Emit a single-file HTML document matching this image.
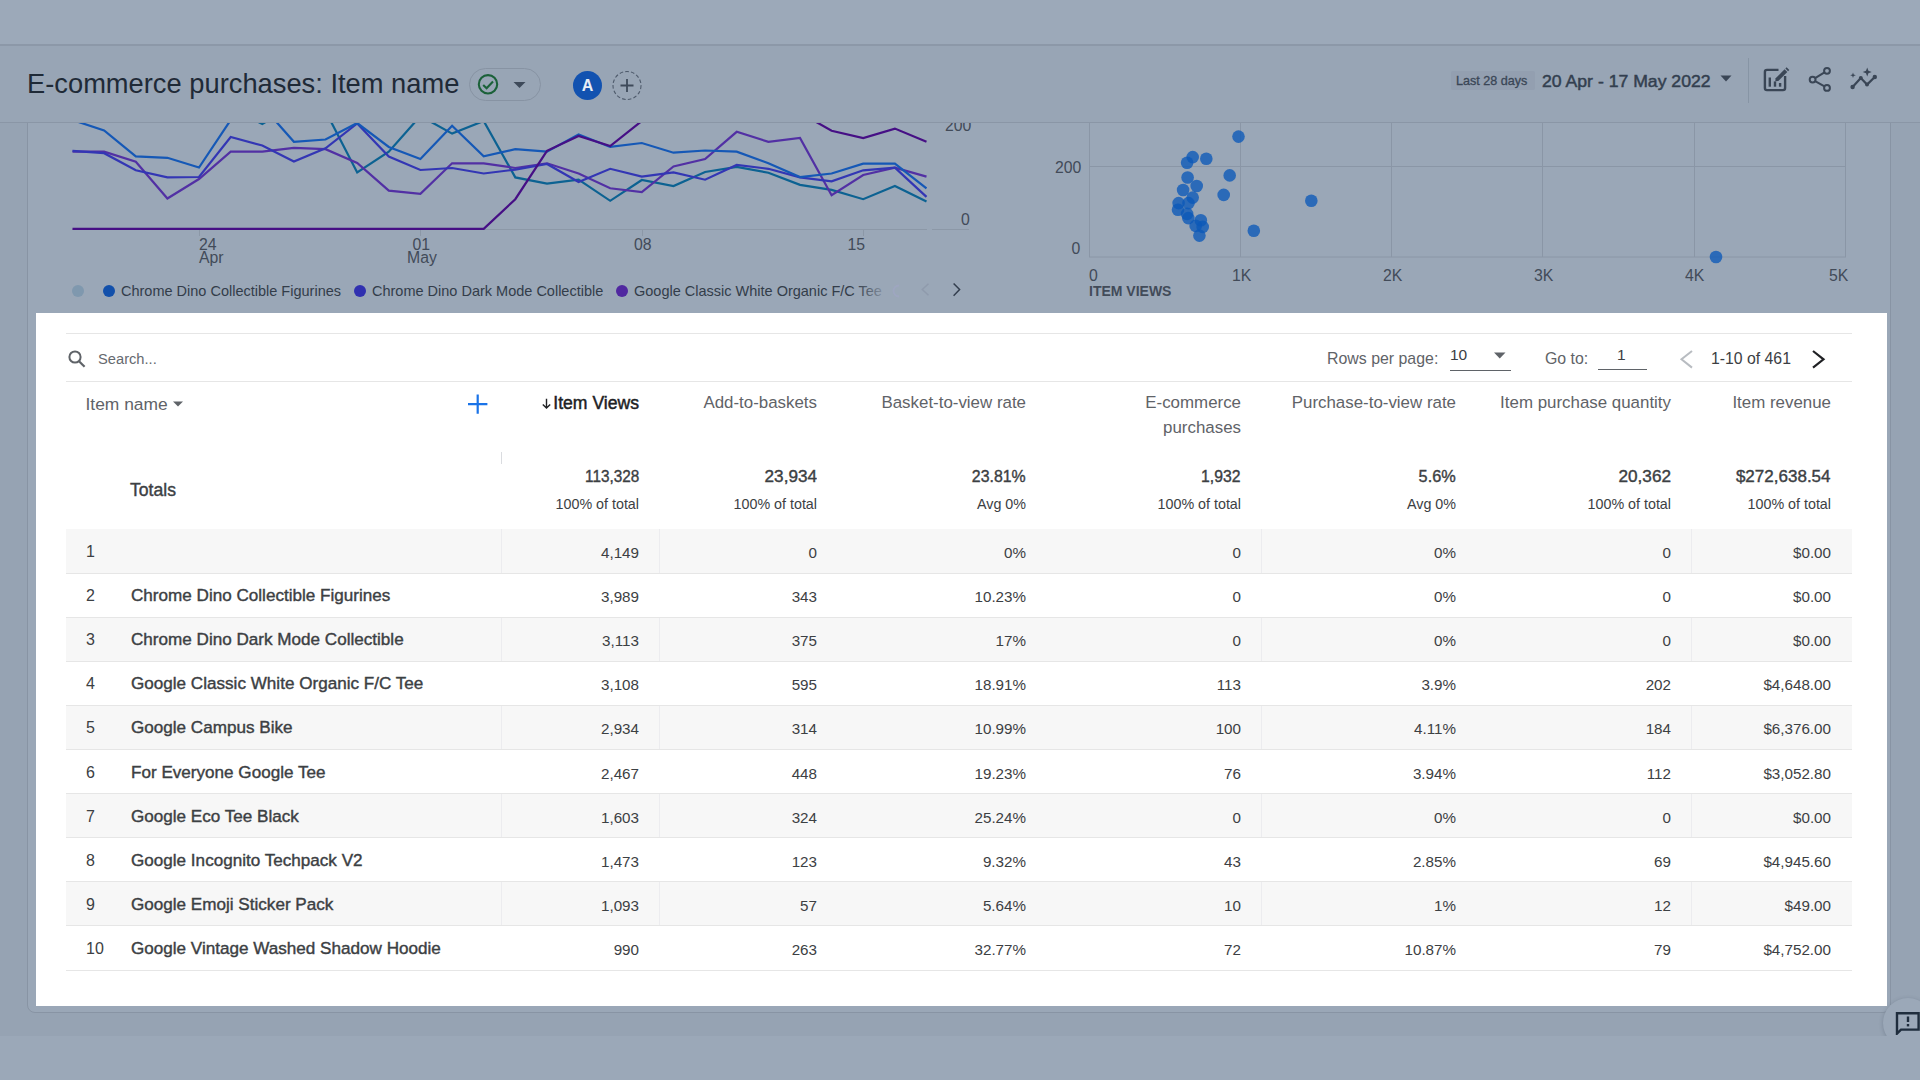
<!DOCTYPE html>
<html><head><meta charset="utf-8"><style>
*{margin:0;padding:0;box-sizing:border-box}
html,body{width:1920px;height:1080px;overflow:hidden;background:#96a3b3;font-family:"Liberation Sans",sans-serif}
.abs{position:absolute}
#top{position:absolute;left:0;top:0;width:1920px;height:46px;background:#9ca9b9;border-bottom:2px solid #8c98a8}
#hdr{position:absolute;left:0;top:46px;width:1920px;height:77px;background:#98a5b5;border-bottom:1px solid #8a96a6}
#bot{position:absolute;left:0;top:1036px;width:1920px;height:44px;background:#9ba8b8}
#card{position:absolute;left:27px;top:100px;width:1864px;height:913px;border:1px solid #8894a4;border-radius:8px;background:#9aa7b7}
#title{position:absolute;left:27px;top:68px;font-size:27.3px;line-height:32px;color:#1f2a37;white-space:nowrap}
#panel{position:absolute;left:36px;top:313px;width:1851px;height:692.5px;background:#fff}
.row{position:absolute;left:66px;width:1786px;height:44px;background:#f7f7f7}
.hl{position:absolute;left:66px;width:1786px;height:1px;background:#e6e6e6}
.vd{position:absolute;width:1px;height:44px;background:#ececef}
.rn{position:absolute;left:86px;height:44px;line-height:45px;font-size:16px;color:#3c4043}
.nm{position:absolute;left:131px;height:44px;line-height:45px;font-size:17.1px;-webkit-text-stroke:0.4px #3c4043;color:#3c4043;white-space:nowrap}
.num{position:absolute;height:44px;line-height:47px;font-size:15.2px;color:#3c4043;white-space:nowrap}
.th{position:absolute;top:391px;font-size:16.9px;line-height:24.5px;color:#5f6368;text-align:right;white-space:nowrap}
.tv{position:absolute;top:466px;font-size:17px;-webkit-text-stroke:0.4px #3c4043;color:#3c4043;line-height:22px;transform-origin:right center;white-space:nowrap}
.ts{position:absolute;top:494px;font-size:14.3px;color:#3c4043;line-height:20px;white-space:nowrap}
.lg{position:absolute;top:282px;font-size:14.5px;color:#333d4a;white-space:nowrap;line-height:18px}
.dot{position:absolute;top:285px;width:12px;height:12px;border-radius:50%}
.ax{position:absolute;font-size:15.8px;color:#424b59;line-height:16px;white-space:nowrap}
.icon{position:absolute}
</style></head><body>
<div id="top"></div>
<div id="card"></div>
<div id="bot"></div>
<!-- feedback -->
<div class="abs" style="left:1883px;top:998px;width:50px;height:50px;border-radius:50%;background:#9ba8b8;box-shadow:0 1px 4px rgba(40,50,70,.25)"></div>
<svg class="icon" style="left:1880px;top:1000px" width="40" height="35" viewBox="1880 1000 40 35">
<path d="M1897 1013.2 H1918.6 V1029.6 H1901 L1897 1033.6 Z" fill="none" stroke="#1f2d3d" stroke-width="2.4" stroke-linejoin="miter"/>
<rect x="1906.8" y="1016.5" width="2.4" height="5.5" fill="#1f2d3d"/>
<rect x="1906.8" y="1024" width="2.4" height="2.4" fill="#1f2d3d"/>
</svg>
<div id="bot2" class="abs" style="left:0;top:1036px;width:1920px;height:44px;background:#9ba8b8"></div>
<!-- line chart -->
<svg class="abs" style="left:0;top:123px" width="1000" height="190" viewBox="0 123 1000 190">
<line x1="72" y1="229.5" x2="927" y2="229.5" stroke="#8c98a7" stroke-width="1"/>
<line x1="932" y1="229.5" x2="969" y2="229.5" stroke="#8c98a7" stroke-width="1"/>
<line x1="199.5" y1="229" x2="199.5" y2="236" stroke="#8c98a7" stroke-width="1"/>
<line x1="420.5" y1="229" x2="420.5" y2="236" stroke="#8c98a7" stroke-width="1"/>
<line x1="642.5" y1="229" x2="642.5" y2="236" stroke="#8c98a7" stroke-width="1"/>
<line x1="863.5" y1="229" x2="863.5" y2="236" stroke="#8c98a7" stroke-width="1"/>
<g fill="none" stroke-width="2.2" stroke-linejoin="miter">
<polyline points="72.5,110.0 104.1,105.0 135.8,112.0 167.4,108.0 199.0,115.0 230.7,108.0 262.3,124.0 293.9,105.0 325.5,111.0 357.2,172.5 388.8,151.7 420.4,116.0 452.1,133.6 483.7,121.0 515.3,177.4 547.0,183.6 578.6,179.7 610.2,200.8 641.8,180.0 673.5,186.0 705.1,172.0 736.7,166.8 768.4,172.7 800.0,184.9 831.6,189.9 863.2,199.2 894.9,186.0 926.5,201.6" stroke="#0c6292"/>
<polyline points="72.5,151.6 104.1,151.6 135.8,161.8 167.4,198.5 199.0,179.0 230.7,151.7 262.3,151.7 293.9,147.8 325.5,149.2 357.2,163.0 388.8,190.7 420.4,193.8 452.1,163.3 483.7,163.3 515.3,168.0 547.0,163.3 578.6,173.5 610.2,188.3 641.8,192.2 673.5,166.4 705.1,159.0 736.7,131.8 768.4,141.8 800.0,138.0 831.6,195.3 863.2,175.0 894.9,167.7 926.5,176.6" stroke="#5230a4"/>
<polyline points="72.5,150.8 104.1,153.2 135.8,170.3 167.4,177.4 199.0,177.0 230.7,137.0 262.3,145.5 293.9,161.5 325.5,148.3 357.2,123.5 388.8,156.5 420.4,170.0 452.1,168.0 483.7,173.5 515.3,169.6 547.0,164.0 578.6,182.0 610.2,168.8 641.8,176.6 673.5,172.4 705.1,179.7 736.7,164.9 768.4,168.8 800.0,177.4 831.6,181.3 863.2,170.3 894.9,167.7 926.5,196.9" stroke="#3336b4"/>
<polyline points="72.5,120.0 104.1,130.5 135.8,156.3 167.4,157.8 199.0,167.5 230.7,120.0 262.3,106.0 293.9,141.8 325.5,139.5 357.2,123.0 388.8,147.0 420.4,159.0 452.1,125.8 483.7,156.3 515.3,149.2 547.0,151.6 578.6,134.4 610.2,146.9 641.8,143.0 673.5,152.7 705.1,150.5 736.7,151.6 768.4,163.3 800.0,177.0 831.6,173.5 863.2,163.6 894.9,163.6 926.5,188.3" stroke="#1558b6"/>
<polyline points="72.5,228.9 104.1,228.9 135.8,228.9 167.4,228.9 199.0,228.9 230.7,228.9 262.3,228.9 293.9,228.9 325.5,228.9 357.2,228.9 388.8,228.9 420.4,228.9 452.1,228.9 483.7,228.9 515.3,199.2 547.0,150.8 578.6,136.0 610.2,146.0 641.8,121.0 673.5,110.0 705.1,105.0 736.7,108.0 768.4,106.0 800.0,112.7 831.6,130.8 863.2,138.0 894.9,128.6 926.5,141.8" stroke="#460f85"/>
</g>
</svg>
<div class="ax" style="left:199px;top:237px">24</div>
<div class="ax" style="left:199px;top:250px">Apr</div>
<div class="ax" style="left:412.5px;top:236.5px">01</div>
<div class="ax" style="left:407px;top:250px">May</div>
<div class="ax" style="left:634px;top:237px">08</div>
<div class="ax" style="left:847.5px;top:237px">15</div>
<div class="ax" style="left:945px;top:118px">200</div>
<div class="ax" style="left:961px;top:212px">0</div>
<div class="dot" style="left:72px;background:#7f98ae"></div>
<div class="dot" style="left:103px;background:#1250ab"></div>
<div class="lg" style="left:121px">Chrome Dino Collectible Figurines</div>
<div class="dot" style="left:354px;background:#3030b0"></div>
<div class="lg" style="left:372px">Chrome Dino Dark Mode Collectible</div>
<div class="dot" style="left:616px;background:#5028a0"></div>
<div class="lg" style="left:634px;width:262px;overflow:hidden">Google Classic White Organic F/C Tee</div>
<div class="abs" style="left:850px;top:280px;width:56px;height:22px;background:linear-gradient(to right,rgba(154,167,183,0) 10%,#9aa7b7 72%)"></div>
<svg class="icon" style="left:890px;top:283px" width="14" height="16" viewBox="890 283 14 16"><path d="M899 285.5 A5.5 5.5 0 0 0 899 296.5" fill="none" stroke="#a3a6c8" stroke-width="1.8" opacity=".55"/></svg>
<svg class="icon" style="left:915px;top:280px" width="50" height="20" viewBox="915 280 50 20">
<path d="M928.5 283.8 L922.3 289.5 L928.5 295.2" fill="none" stroke="#8f9aac" stroke-width="1.5"/>
<path d="M953.6 283.4 L959.6 289.6 L953.6 295.8" fill="none" stroke="#333e4e" stroke-width="1.5"/>
</svg>
<!-- scatter -->
<svg class="abs" style="left:1040px;top:123px" width="840" height="190" viewBox="1040 123 840 190">
<g stroke="#8a96a6" stroke-width="1" fill="none">
<line x1="1089" y1="166.5" x2="1846" y2="166.5"/>
<line x1="1089" y1="257" x2="1846" y2="257"/>
<line x1="1089.5" y1="123" x2="1089.5" y2="257"/>
<line x1="1240.5" y1="123" x2="1240.5" y2="257"/>
<line x1="1391.5" y1="123" x2="1391.5" y2="257"/>
<line x1="1542.5" y1="123" x2="1542.5" y2="257"/>
<line x1="1694.5" y1="123" x2="1694.5" y2="257"/>
<line x1="1845.5" y1="123" x2="1845.5" y2="257"/>
</g>
<g fill="#0b58b8" fill-opacity="0.78"><circle cx="1238.5" cy="136.6" r="6.3"/><circle cx="1192.7" cy="157.1" r="6.3"/><circle cx="1187.1" cy="162.7" r="6.3"/><circle cx="1206.3" cy="158.8" r="6.3"/><circle cx="1229.7" cy="175.4" r="6.3"/><circle cx="1187.6" cy="177.5" r="6.3"/><circle cx="1196.7" cy="186.0" r="6.3"/><circle cx="1183.1" cy="190.0" r="6.3"/><circle cx="1223.7" cy="194.9" r="6.3"/><circle cx="1192.7" cy="197.6" r="6.3"/><circle cx="1178.6" cy="203.1" r="6.3"/><circle cx="1188.5" cy="203.1" r="6.3"/><circle cx="1178.0" cy="209.7" r="6.3"/><circle cx="1187.1" cy="213.9" r="6.3"/><circle cx="1188.3" cy="218.1" r="6.3"/><circle cx="1200.8" cy="220.2" r="6.3"/><circle cx="1202.7" cy="226.9" r="6.3"/><circle cx="1195.7" cy="225.9" r="6.3"/><circle cx="1199.4" cy="235.6" r="6.3"/><circle cx="1253.8" cy="230.7" r="6.3"/><circle cx="1311.3" cy="200.7" r="6.3"/><circle cx="1716.0" cy="257.0" r="6.3"/></g>
</svg>
<div class="ax" style="left:1055px;top:160px">200</div>
<div class="ax" style="left:1071.5px;top:240.5px">0</div>
<div class="ax" style="left:1089px;top:268px">0</div>
<div class="ax" style="left:1232px;top:268px">1K</div>
<div class="ax" style="left:1383px;top:268px">2K</div>
<div class="ax" style="left:1534px;top:268px">3K</div>
<div class="ax" style="left:1685px;top:268px">4K</div>
<div class="ax" style="left:1829px;top:268px">5K</div>
<div class="ax" style="left:1089px;top:282.5px;font-weight:bold;font-size:14px">ITEM VIEWS</div>
<div id="hdr"></div>
<div id="title">E-commerce purchases: Item name</div>
<!-- pill -->
<div class="abs" style="left:469px;top:68px;width:72px;height:33px;border:1px solid #8793a3;border-radius:17px"></div>
<svg class="icon" style="left:470px;top:70px" width="70" height="30" viewBox="470 70 70 30">
<circle cx="488" cy="84.3" r="9.2" fill="none" stroke="#1b6139" stroke-width="2.1"/>
<path d="M483.2 85 L486.6 88.3 L493 81.6" fill="none" stroke="#1b6139" stroke-width="2.1"/>
<path d="M513.5 82 H525.5 L519.5 88 Z" fill="#3e4a5a"/>
</svg>
<div class="abs" style="left:573px;top:71px;width:29px;height:29px;border-radius:50%;background:#1252b0;color:#e8eef6;font-weight:bold;font-size:16px;line-height:29px;text-align:center">A</div>
<svg class="icon" style="left:610px;top:68px" width="35" height="35" viewBox="610 68 35 35">
<circle cx="627" cy="85.5" r="14" fill="none" stroke="#4f5b6c" stroke-width="1.1" stroke-dasharray="3.6 2.2"/>
<path d="M627 79 V92 M620.5 85.5 H633.5" stroke="#3e4a5a" stroke-width="1.8"/>
</svg>
<!-- date -->
<div class="abs" style="left:1451px;top:71px;width:84px;height:19px;background:#939fb0;border-radius:2px"></div>
<div class="abs" style="left:1456px;top:73.5px;font-size:12.6px;line-height:15px;-webkit-text-stroke:0.3px #3a4656;color:#3a4656;white-space:nowrap">Last 28 days</div>
<div class="abs" style="left:1541.5px;top:71px;font-size:16.3px;line-height:20px;-webkit-text-stroke:0.45px #333f4f;color:#333f4f;white-space:nowrap;transform:scaleX(1.083);transform-origin:left center">20 Apr - 17 May 2022</div>
<svg class="icon" style="left:1715px;top:70px" width="25" height="20" viewBox="1715 70 25 20">
<path d="M1720.5 75.5 H1731.5 L1726 81.5 Z" fill="#3a4656"/>
</svg>
<div class="abs" style="left:1748px;top:58px;width:1px;height:45px;background:#8795a5"></div>
<svg class="icon" style="left:1755px;top:60px" width="130" height="40" viewBox="1755 60 130 40">
<g fill="none" stroke="#3a4656" stroke-width="2.4">
<path d="M1778.5 69.9 H1767 Q1764.9 69.9 1764.9 72 V88 Q1764.9 90.1 1767 90.1 H1783 Q1785.1 90.1 1785.1 88 V76"/>
</g>
<g fill="#3a4656">
<rect x="1768.6" y="77.5" width="2.4" height="9.2"/>
<rect x="1773.8" y="81.4" width="2.4" height="5.3"/>
<rect x="1778.9" y="83" width="2.4" height="3.7"/>
<path d="M1775.6 78.3 L1784.6 69.3 L1787.3 72 L1778.3 81 L1775.3 81.3 Z"/>
<path d="M1785.4 68.5 L1786.6 67.3 L1789.3 70 L1788.1 71.2 Z"/>
</g>
<g fill="none" stroke="#3a4656" stroke-width="2">
<circle cx="1827" cy="70.8" r="2.9"/>
<circle cx="1812.6" cy="79.6" r="2.9"/>
<circle cx="1827" cy="87.9" r="2.9"/>
<path d="M1824.5 72.3 L1815.1 78.1 M1815.1 81.1 L1824.5 86.4"/>
</g>
<g fill="none" stroke="#3a4656" stroke-width="2.2" stroke-linejoin="round">
<path d="M1852.6 87 L1860.8 78 L1867 84.6 L1874.8 77"/>
</g>
<g fill="#3a4656">
<circle cx="1852.6" cy="87" r="2.2"/><circle cx="1860.8" cy="78" r="2"/><circle cx="1867" cy="84.6" r="2"/><circle cx="1874.8" cy="77" r="2.2"/>
<path d="M1867.2 67.5 L1868.4 70.8 L1871.7 72 L1868.4 73.2 L1867.2 76.5 L1866 73.2 L1862.7 72 L1866 70.8 Z"/>
<path d="M1853 72.5 L1853.7 74.6 L1855.8 75.3 L1853.7 76 L1853 78.1 L1852.3 76 L1850.2 75.3 L1852.3 74.6 Z"/>
</g>
</svg>
<!-- table panel -->
<div id="panel"></div>
<div class="hl" style="top:333px"></div>
<svg class="icon" style="left:64px;top:346px" width="26" height="26" viewBox="64 346 26 26">
<circle cx="75" cy="357" r="5.6" fill="none" stroke="#5f6368" stroke-width="2"/>
<path d="M79 361.2 L84.6 366.8" stroke="#5f6368" stroke-width="2.2"/>
</svg>
<div class="abs" style="left:98px;top:350px;font-size:14.7px;line-height:18px;color:#666a6f">Search...</div>
<div class="abs" style="left:1327px;top:349px;font-size:15.9px;line-height:20px;color:#5f6368">Rows per page:</div>
<div class="abs" style="left:1450px;top:346px;font-size:15.5px;line-height:18px;color:#3c4043">10</div>
<svg class="icon" style="left:1490px;top:348px" width="20" height="14" viewBox="1490 348 20 14">
<path d="M1494 352.5 H1505.5 L1499.75 358.6 Z" fill="#5f6368"/>
</svg>
<div class="abs" style="left:1450px;top:369.5px;width:61px;height:1px;background:#5f6368"></div>
<div class="abs" style="left:1545px;top:349px;font-size:15.9px;line-height:20px;color:#5f6368">Go to:</div>
<div class="abs" style="left:1617px;top:346px;font-size:15.5px;line-height:18px;color:#3c4043">1</div>
<div class="abs" style="left:1598px;top:369px;width:49px;height:1px;background:#5f6368"></div>
<svg class="icon" style="left:1675px;top:345px" width="160" height="28" viewBox="1675 345 160 28">
<path d="M1692 351 L1681.5 359.3 L1692 367.6" fill="none" stroke="#b8bcc1" stroke-width="2"/>
<path d="M1813 351 L1823.5 359.3 L1813 367.6" fill="none" stroke="#202124" stroke-width="2.2"/>
</svg>
<div class="abs" style="left:1711px;top:349px;font-size:15.8px;line-height:20px;color:#3c4043">1-10 of 461</div>
<div class="hl" style="top:381px"></div>
<div class="abs" style="left:85.5px;top:391.7px;font-size:17.4px;line-height:24.5px;color:#5f6368">Item name</div>
<svg class="icon" style="left:168px;top:396px" width="20" height="16" viewBox="168 396 20 16">
<path d="M173 401.5 H183 L178 406.5 Z" fill="#5f6368"/>
</svg>
<svg class="icon" style="left:462px;top:390px" width="30" height="30" viewBox="462 390 30 30">
<path d="M477.7 394.5 V413.7 M468 404.1 H487.4" stroke="#1a73e8" stroke-width="2.2"/>
</svg>
<svg class="icon" style="left:538px;top:395px" width="16" height="18" viewBox="538 395 16 18">
<path d="M546.5 398.8 V408 M542.8 404.4 L546.5 408.1 L550.2 404.4" fill="none" stroke="#202124" stroke-width="1.4"/>
</svg>
<div class="abs" style="right:1281px;top:391px;font-size:17.6px;line-height:24.5px;-webkit-text-stroke:0.45px #202124;color:#202124;white-space:nowrap">Item Views</div>
<div class="th" style="right:1103px">Add-to-baskets</div>
<div class="th" style="right:894px">Basket-to-view rate</div>
<div class="th" style="right:679px">E-commerce<br>purchases</div>
<div class="th" style="right:464px">Purchase-to-view rate</div>
<div class="th" style="right:249px">Item purchase quantity</div>
<div class="th" style="right:89px">Item revenue</div>
<div class="abs" style="left:501px;top:452px;width:1px;height:12px;background:#dadce0"></div>
<div class="tv" style="right:1281px;transform:scaleX(0.900)">113,328</div><div class="ts" style="right:1281px">100% of total</div>
<div class="tv" style="right:1103px;transform:scaleX(1.008)">23,934</div><div class="ts" style="right:1103px">100% of total</div>
<div class="tv" style="right:894px;transform:scaleX(0.934)">23.81%</div><div class="ts" style="right:894px">Avg 0%</div>
<div class="tv" style="right:679px;transform:scaleX(0.927)">1,932</div><div class="ts" style="right:679px">100% of total</div>
<div class="tv" style="right:464px;transform:scaleX(0.959)">5.6%</div><div class="ts" style="right:464px">Avg 0%</div>
<div class="tv" style="right:249px;transform:scaleX(1.010)">20,362</div><div class="ts" style="right:249px">100% of total</div>
<div class="tv" style="right:89px;transform:scaleX(1.001)">$272,638.54</div><div class="ts" style="right:89px">100% of total</div>
<div class="abs" style="left:130px;top:479px;font-size:17.6px;line-height:22px;-webkit-text-stroke:0.4px #3c4043;color:#3c4043">Totals</div>
<div class="row" style="top:529.0px;height:44.1px"></div>
<div class="row" style="top:617.2px;height:44.1px"></div>
<div class="row" style="top:705.4px;height:44.1px"></div>
<div class="row" style="top:793.6px;height:44.1px"></div>
<div class="row" style="top:881.8px;height:44.1px"></div>
<div class="vd" style="top:529.0px;left:501px"></div>
<div class="vd" style="top:529.0px;left:659px"></div>
<div class="vd" style="top:529.0px;left:1261px"></div>
<div class="vd" style="top:529.0px;left:1691px"></div>
<div class="vd" style="top:617.2px;left:501px"></div>
<div class="vd" style="top:617.2px;left:659px"></div>
<div class="vd" style="top:617.2px;left:1261px"></div>
<div class="vd" style="top:617.2px;left:1691px"></div>
<div class="vd" style="top:705.4px;left:501px"></div>
<div class="vd" style="top:705.4px;left:659px"></div>
<div class="vd" style="top:705.4px;left:1261px"></div>
<div class="vd" style="top:705.4px;left:1691px"></div>
<div class="vd" style="top:793.6px;left:501px"></div>
<div class="vd" style="top:793.6px;left:659px"></div>
<div class="vd" style="top:793.6px;left:1261px"></div>
<div class="vd" style="top:793.6px;left:1691px"></div>
<div class="vd" style="top:881.8px;left:501px"></div>
<div class="vd" style="top:881.8px;left:659px"></div>
<div class="vd" style="top:881.8px;left:1261px"></div>
<div class="vd" style="top:881.8px;left:1691px"></div>
<div class="hl" style="top:572.6px"></div>
<div class="hl" style="top:616.7px"></div>
<div class="hl" style="top:660.8px"></div>
<div class="hl" style="top:704.9px"></div>
<div class="hl" style="top:749.0px"></div>
<div class="hl" style="top:793.1px"></div>
<div class="hl" style="top:837.2px"></div>
<div class="hl" style="top:881.3px"></div>
<div class="hl" style="top:925.4px"></div>
<div class="hl" style="top:969.5px"></div>
<div class="rn" style="top:529.0px">1</div>
<div class="num" style="top:529.0px;right:1281px">4,149</div>
<div class="num" style="top:529.0px;right:1103px">0</div>
<div class="num" style="top:529.0px;right:894px">0%</div>
<div class="num" style="top:529.0px;right:679px">0</div>
<div class="num" style="top:529.0px;right:464px">0%</div>
<div class="num" style="top:529.0px;right:249px">0</div>
<div class="num" style="top:529.0px;right:89px">$0.00</div>
<div class="rn" style="top:573.1px">2</div>
<div class="nm" style="top:573.1px">Chrome Dino Collectible Figurines</div>
<div class="num" style="top:573.1px;right:1281px">3,989</div>
<div class="num" style="top:573.1px;right:1103px">343</div>
<div class="num" style="top:573.1px;right:894px">10.23%</div>
<div class="num" style="top:573.1px;right:679px">0</div>
<div class="num" style="top:573.1px;right:464px">0%</div>
<div class="num" style="top:573.1px;right:249px">0</div>
<div class="num" style="top:573.1px;right:89px">$0.00</div>
<div class="rn" style="top:617.2px">3</div>
<div class="nm" style="top:617.2px">Chrome Dino Dark Mode Collectible</div>
<div class="num" style="top:617.2px;right:1281px">3,113</div>
<div class="num" style="top:617.2px;right:1103px">375</div>
<div class="num" style="top:617.2px;right:894px">17%</div>
<div class="num" style="top:617.2px;right:679px">0</div>
<div class="num" style="top:617.2px;right:464px">0%</div>
<div class="num" style="top:617.2px;right:249px">0</div>
<div class="num" style="top:617.2px;right:89px">$0.00</div>
<div class="rn" style="top:661.3px">4</div>
<div class="nm" style="top:661.3px">Google Classic White Organic F/C Tee</div>
<div class="num" style="top:661.3px;right:1281px">3,108</div>
<div class="num" style="top:661.3px;right:1103px">595</div>
<div class="num" style="top:661.3px;right:894px">18.91%</div>
<div class="num" style="top:661.3px;right:679px">113</div>
<div class="num" style="top:661.3px;right:464px">3.9%</div>
<div class="num" style="top:661.3px;right:249px">202</div>
<div class="num" style="top:661.3px;right:89px">$4,648.00</div>
<div class="rn" style="top:705.4px">5</div>
<div class="nm" style="top:705.4px">Google Campus Bike</div>
<div class="num" style="top:705.4px;right:1281px">2,934</div>
<div class="num" style="top:705.4px;right:1103px">314</div>
<div class="num" style="top:705.4px;right:894px">10.99%</div>
<div class="num" style="top:705.4px;right:679px">100</div>
<div class="num" style="top:705.4px;right:464px">4.11%</div>
<div class="num" style="top:705.4px;right:249px">184</div>
<div class="num" style="top:705.4px;right:89px">$6,376.00</div>
<div class="rn" style="top:749.5px">6</div>
<div class="nm" style="top:749.5px">For Everyone Google Tee</div>
<div class="num" style="top:749.5px;right:1281px">2,467</div>
<div class="num" style="top:749.5px;right:1103px">448</div>
<div class="num" style="top:749.5px;right:894px">19.23%</div>
<div class="num" style="top:749.5px;right:679px">76</div>
<div class="num" style="top:749.5px;right:464px">3.94%</div>
<div class="num" style="top:749.5px;right:249px">112</div>
<div class="num" style="top:749.5px;right:89px">$3,052.80</div>
<div class="rn" style="top:793.6px">7</div>
<div class="nm" style="top:793.6px">Google Eco Tee Black</div>
<div class="num" style="top:793.6px;right:1281px">1,603</div>
<div class="num" style="top:793.6px;right:1103px">324</div>
<div class="num" style="top:793.6px;right:894px">25.24%</div>
<div class="num" style="top:793.6px;right:679px">0</div>
<div class="num" style="top:793.6px;right:464px">0%</div>
<div class="num" style="top:793.6px;right:249px">0</div>
<div class="num" style="top:793.6px;right:89px">$0.00</div>
<div class="rn" style="top:837.7px">8</div>
<div class="nm" style="top:837.7px">Google Incognito Techpack V2</div>
<div class="num" style="top:837.7px;right:1281px">1,473</div>
<div class="num" style="top:837.7px;right:1103px">123</div>
<div class="num" style="top:837.7px;right:894px">9.32%</div>
<div class="num" style="top:837.7px;right:679px">43</div>
<div class="num" style="top:837.7px;right:464px">2.85%</div>
<div class="num" style="top:837.7px;right:249px">69</div>
<div class="num" style="top:837.7px;right:89px">$4,945.60</div>
<div class="rn" style="top:881.8px">9</div>
<div class="nm" style="top:881.8px">Google Emoji Sticker Pack</div>
<div class="num" style="top:881.8px;right:1281px">1,093</div>
<div class="num" style="top:881.8px;right:1103px">57</div>
<div class="num" style="top:881.8px;right:894px">5.64%</div>
<div class="num" style="top:881.8px;right:679px">10</div>
<div class="num" style="top:881.8px;right:464px">1%</div>
<div class="num" style="top:881.8px;right:249px">12</div>
<div class="num" style="top:881.8px;right:89px">$49.00</div>
<div class="rn" style="top:925.9px">10</div>
<div class="nm" style="top:925.9px">Google Vintage Washed Shadow Hoodie</div>
<div class="num" style="top:925.9px;right:1281px">990</div>
<div class="num" style="top:925.9px;right:1103px">263</div>
<div class="num" style="top:925.9px;right:894px">32.77%</div>
<div class="num" style="top:925.9px;right:679px">72</div>
<div class="num" style="top:925.9px;right:464px">10.87%</div>
<div class="num" style="top:925.9px;right:249px">79</div>
<div class="num" style="top:925.9px;right:89px">$4,752.00</div>
</body></html>
